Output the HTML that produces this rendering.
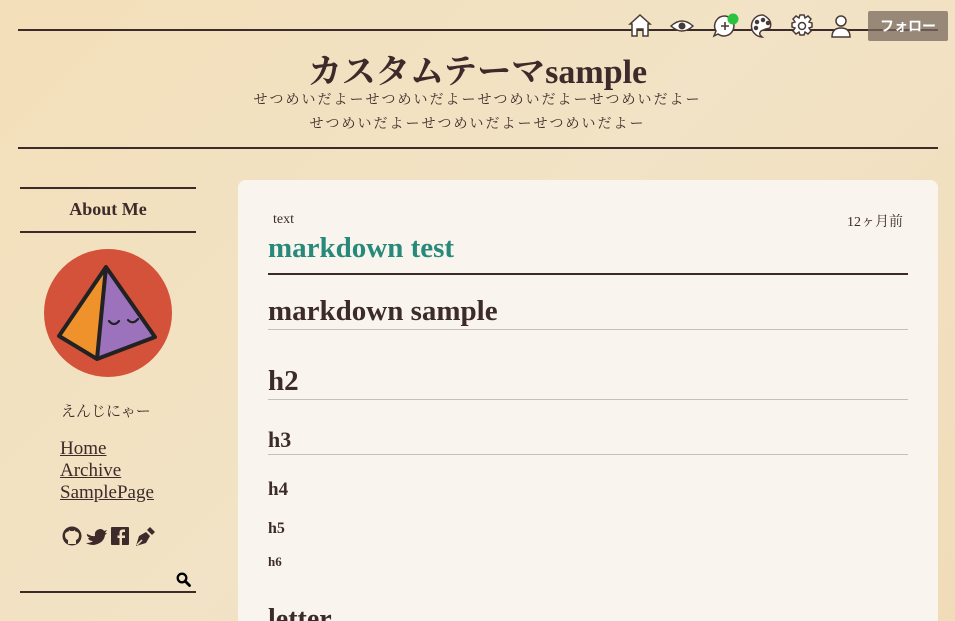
<!DOCTYPE html>
<html style="width:955px;height:621px;overflow:hidden"><head><meta charset="utf-8"><style>
*{margin:0;padding:0;box-sizing:border-box}
body{width:955px;height:621px;overflow:hidden;background:linear-gradient(135deg,#f3dfb9 0%,#f2e3c6 50%,#f0dcb8 100%);font-family:"Liberation Serif","Noto Serif CJK SC",serif;color:#3d2a2a;position:relative}
.abs{position:absolute}
.line{position:absolute;background:#3d2a2a}
h1{position:absolute;left:0;width:955px;top:44px;text-align:center;font-size:34px;font-weight:bold;font-family:"Liberation Serif","Noto Serif CJK JP",serif}
.desc{position:absolute;left:0;width:955px;top:89px;text-align:center;font-size:14px;line-height:24px;letter-spacing:2px;font-family:"Liberation Serif","Noto Serif CJK JP",serif}
.card{position:absolute;left:238px;top:180px;width:700px;height:441px;background:#f9f5ee;border-radius:8px 8px 0 0}
.hd{position:absolute;left:268px;font-weight:bold;color:#3d2a2a;white-space:nowrap}
.rule{position:absolute;left:268px;width:640px;height:1px;background:#c6bfbb}
.links a{display:block;color:#3d2a2a;text-decoration:underline;font-size:19px;line-height:22px}
.follow{position:absolute;left:868px;top:11px;width:80px;height:30px;background:rgba(120,105,95,0.75);color:#fff;font-family:"Liberation Sans","Noto Sans CJK JP",sans-serif;font-weight:bold;font-size:14px;text-align:center;line-height:30px;border-radius:2px}
</style></head><body>
<div class="line" style="left:18px;top:29px;width:920px;height:2px"></div>
<div class="follow">フォロー</div>
<svg class="abs" style="left:626px;top:10px" width="230" height="30" viewBox="0 0 230 30" fill="#fff" stroke="#4a3a35" stroke-width="1.5">
<path d="M4 14 L14 5 L24 14 L22 14 L22 26 L17 26 L17 19 L11 19 L11 26 L6 26 L6 14Z"/>
<path d="M45 16 Q56 6 67 16 Q56 26 45 16Z"/><circle cx="56" cy="16" r="3.5" fill="#4a3a35" stroke="none"/>
<path d="M99 6 A10 10 0 1 1 92 24 L88 26 L90 21 A10 10 0 0 1 99 6Z"/><path d="M95 16 H103 M99 12 V20" stroke-width="1.6"/>
<circle cx="107" cy="9" r="5.5" fill="#2bc23d" stroke="none"/>
<path d="M137 5 A11 11 0 1 0 136 27 Q132 24 135 21 Q139 19 144 18 Q147 10 137 5Z"/>
<circle cx="131" cy="12" r="1.5" fill="#4a3a35"/><circle cx="137" cy="10" r="1.5" fill="#4a3a35"/><circle cx="142" cy="13" r="1.5" fill="#4a3a35"/><circle cx="130" cy="18" r="1.5" fill="#4a3a35"/>
<path d="M174 5 h4 l1 3 3 -2 3 3 -2 3 3 1 v4 l-3 1 2 3 -3 3 -3 -2 -1 3 h-4 l-1 -3 -3 2 -3 -3 2 -3 -3 -1 v-4 l3 -1 -2 -3 3 -3 3 2z"/><circle cx="176" cy="16" r="3.5"/>
<circle cx="215" cy="11" r="5"/><path d="M206 27 Q206 18 215 18 Q224 18 224 27Z"/>
</svg>
<h1>カスタムテーマsample</h1>
<div class="desc">せつめいだよーせつめいだよーせつめいだよーせつめいだよー<br>せつめいだよーせつめいだよーせつめいだよー</div>
<div class="line" style="left:18px;top:147px;width:920px;height:2px"></div>

<div class="line" style="left:20px;top:187px;width:176px;height:2px"></div>
<div class="abs" style="left:20px;top:199px;width:176px;text-align:center;font-weight:bold;font-size:18px">About Me</div>
<div class="line" style="left:20px;top:231px;width:176px;height:2px"></div>
<svg class="abs" style="left:44px;top:249px" width="128" height="128" viewBox="44 249 128 128">
<circle cx="108" cy="313" r="64" fill="#d5523a"/>
<path d="M106 267 L59 336 L97 359Z" fill="#f0922c"/>
<path d="M106 267 L155 337 L97 359Z" fill="#9c72bc"/>
<path d="M106 267 L59 336 L97 359 L155 337Z M106 267 L97 359" fill="none" stroke="#222" stroke-width="4" stroke-linejoin="round"/>
<path d="M109 321 Q114 327 119 321 M128 320 Q133 325 138 319" fill="none" stroke="#222" stroke-width="2.2" stroke-linecap="round"/>
</svg>
<div class="abs" style="left:61px;top:400px;font-size:15px;font-family:'Liberation Serif','Noto Serif CJK JP',serif">えんじにゃー</div>
<div class="abs links" style="left:60px;top:438px"><a>Home</a><a>Archive</a><a>SamplePage</a></div>
<svg class="abs" style="left:61px;top:525px" width="95" height="22" viewBox="0 0 95 22" fill="#3d2a2a">
<circle cx="11" cy="11" r="9.5"/><path d="M7 19 v-4 q-3 -1 -3 -5 q0 -4 7 -4 q7 0 7 4 q0 4 -3 5 v4z" fill="#f2e0c0"/><path d="M8 8 l0 -3 l3 2 h0 l3 -2 v3z" fill="#f2e0c0"/>
<path d="M25 7 Q29 12 34 11 Q33 5 39 4 Q42 4 43 6 L46 5 L44 8 L46 8 L44 10 Q43 18 33 20 Q28 20 25 18 Q30 18 32 16 Q28 16 27 13 L29 13 Q25 11 26 9 L28 10Z"/>
<rect x="50" y="2" width="18" height="18" rx="1"/><path d="M61 20 v-7 h3 v-2.5 h-3 v-2 q0 -1.5 1.5 -1.5 h1.5 v-2.5 h-2.5 q-3 0 -3 3 v3 h-2 v2.5 h2 v7z" fill="#f2e0c0"/>
<path d="M75 21 L78 11 L85 7 L89 11 L85 18Z"/><path d="M86 5 L89 2 L94 7 L91 10Z"/><path d="M76 20 L81 15" stroke="#f2e0c0" stroke-width="1.5"/>
</svg>
<svg class="abs" style="left:176px;top:572px" width="15" height="15" viewBox="0 0 15 15"><circle cx="6" cy="6" r="4.3" fill="none" stroke="#000" stroke-width="2.3"/><path d="M9 9 L13.5 13.5" stroke="#000" stroke-width="2.8" stroke-linecap="round"/></svg>
<div class="line" style="left:20px;top:591px;width:176px;height:2px"></div>

<div class="card"></div>
<div class="abs" style="left:273px;top:212px;font-size:14px">text</div>
<div class="abs" style="left:847px;top:211px;font-size:14px;font-family:'Liberation Serif','Noto Serif CJK JP',serif">12ヶ月前</div>
<div class="hd" style="top:232px;font-size:29px;color:#27897a">markdown test</div>
<div class="line" style="left:268px;top:273px;width:640px;height:2px"></div>
<div class="hd" style="top:295px;font-size:29px">markdown sample</div>
<div class="rule" style="top:329px"></div>
<div class="hd" style="top:365px;font-size:29px">h2</div>
<div class="rule" style="top:399px"></div>
<div class="hd" style="top:427px;font-size:22px">h3</div>
<div class="rule" style="top:454px"></div>
<div class="hd" style="top:479px;font-size:19px">h4</div>
<div class="hd" style="top:520px;font-size:16px">h5</div>
<div class="hd" style="top:554px;font-size:13px">h6</div>
<div class="hd" style="top:604px;font-size:28px">letter</div>
</body></html>
